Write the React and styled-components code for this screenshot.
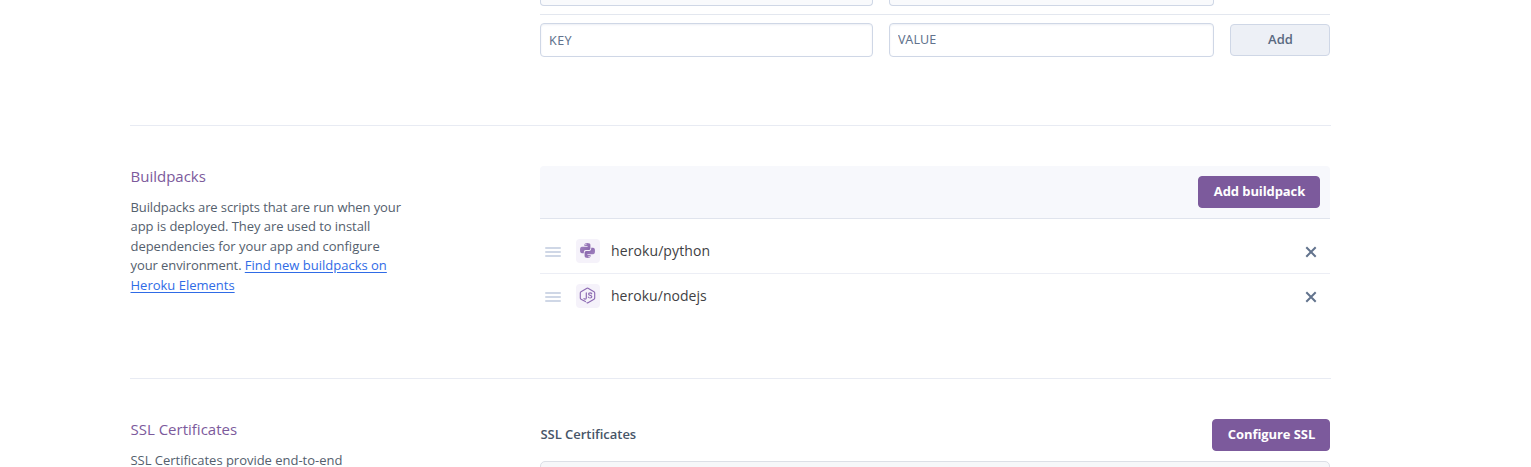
import React from "react";
import styled, { createGlobalStyle } from "styled-components";

const GlobalStyle = createGlobalStyle`
  *, *::before, *::after { box-sizing: border-box; }
  html, body { margin: 0; background: #fff; }
  body { font-family: "Open Sans", "Noto Sans", sans-serif; font-size: 13px; color: #54606d; }
`;

const Page = styled.main`
  width: 1201px;
  height: 467px;
  margin-left: 130px;
  overflow: hidden;
`;

const ConfigVars = styled.section`
  width: 790px;
  height: 125px;
  margin-left: 410px;
`;

const VarRow = styled.div`
  display: grid;
  grid-template-columns: 333px 325px 100px;
  column-gap: 16px;
  align-items: center;
`;

const SavedRow = styled(VarRow)`
  height: 15px;
  align-items: start;
  border-bottom: 1px solid #e3e7ef;
`;

const SavedField = styled.div`
  height: 6px;
  background: #f9fafc;
  border: 1px solid #cfd7e6;
  border-top: 0;
  border-radius: 0 0 4px 4px;
`;

const NewRow = styled(VarRow)`
  margin-top: 8px;
`;

const Field = styled.input`
  width: 100%;
  height: 34px;
  padding: ${(p) => (p.$lowered ? "0 8px" : "0 8px 2px")};
  border: 1px solid #cfd7e6;
  border-radius: 4px;
  background: #fff;
  box-shadow: inset 0 1px 2px rgba(207, 215, 230, 0.4);
  font: 12.5px "Noto Sans", sans-serif;
  letter-spacing: ${(p) => p.$tracking};
  &::placeholder { color: #62738d; opacity: 1; }
`;

const Button = styled.button`
  width: ${(p) => p.$width}px;
  height: 32px;
  padding: 0 0 2px 1px;
  border: 1px solid ${(p) => (p.$primary ? "#7c5a9c" : "#cfd7e6")};
  border-radius: 4px;
  background: ${(p) => (p.$primary ? "#7c5a9c" : "#edf0f6")};
  color: ${(p) => (p.$primary ? "#fff" : "#596981")};
  font: ${(p) => (p.$primary ? 700 : 600)} 13px "Open Sans", sans-serif;
  letter-spacing: ${(p) => p.$tracking || "0"};
  white-space: nowrap;
`;

const Section = styled.section`
  display: grid;
  grid-template-columns: 410px 790px;
  height: ${(p) => p.$height}px;
  padding-top: 40px;
  border-top: 1px solid #e8ebf3;
`;

const Intro = styled.div`
  padding-left: 0.5px;
`;

const Title = styled.h2`
  margin: 0;
  font-size: 15px;
  font-weight: 400;
  line-height: 20px;
  color: #7c5a9c;
`;

const Copy = styled.p`
  margin: 11.5px 0 0;
  line-height: 19.5px;
  white-space: nowrap;
`;

const Line = styled.span`
  display: block;
  letter-spacing: ${(p) => p.$tracking};
`;

const Link = styled.a`
  color: #2f6be6;
  letter-spacing: 0;
  text-decoration: underline;
  text-underline-offset: 2px;
`;

const PackHeader = styled.header`
  display: flex;
  justify-content: flex-end;
  height: 53px;
  padding: 10px;
  background: #f7f8fc;
  border-bottom: 1px solid #e0e4ed;
  border-radius: 4px 4px 0 0;
`;

const PackList = styled.ul`
  list-style: none;
  margin: 10px 0 0;
  padding: 0;
`;

const PackRow = styled.li`
  display: flex;
  align-items: center;
  height: 45px;
  padding: 0 13px 1px 5px;
  &:not(:last-child) { border-bottom: 1px solid #eceef5; }
  & + & { padding-bottom: 2px; }
`;

const Handle = styled.span`
  display: grid;
  gap: 2px;
  width: 16px;
  margin-top: 2px;
  &::before, &::after { content: ""; height: 2px; border-radius: 1px; background: #cfd7e6; }
`;

const HandleBar = styled.i`
  display: block;
  height: 2px;
  border-radius: 1px;
  background: #cfd7e6;
`;

const Tile = styled.span`
  display: grid;
  place-items: center;
  width: 24px;
  height: 24px;
  margin: 0 11px 0 15px;
  border-radius: 4px;
  background: #f5f2fa;
  svg { display: block; width: 17px; height: 17px; margin: -1px 0 0 -1px; }
`;

const PackName = styled.span`
  flex: 1;
  font-size: 14px;
  letter-spacing: ${(p) => p.$tracking};
  color: #3f3f44;
`;

const Remove = styled.svg`
  width: 12px;
  height: 12px;
  margin-top: 2px;
  stroke: #62738d;
  stroke-width: 2;
`;

const CertBar = styled.div`
  display: flex;
  justify-content: space-between;
  align-items: center;
`;

const CertLabel = styled.strong`
  padding: 0 0 2px 0.5px;
  font-weight: 600;
  letter-spacing: -0.03px;
  color: #475568;
`;

const CertBox = styled.div`
  height: 60px;
  margin-top: 10px;
  border: 1px solid #dcdfe6;
  border-radius: 5px;
  background: #f6f7f9;
`;

const snake =
  "M4.4 1.9Q4.4 0 7.4 0Q10.4 0 10.4 1.9V5.5Q10.4 7.1 8.8 7.1H5.6Q3.8 7.1 3.8 8.9V10.2H2Q0 10.2 0 6.9Q0 3.7 2 3.7H7.6V3H4.4ZM5.3 1.6A.6 .6 0 1 0 6.5 1.6A.6 .6 0 1 0 5.3 1.6Z";

function PythonIcon() {
  return (
    <svg viewBox="-1 -1 17 17" fill="url(#snakeFill)" fillRule="evenodd">
      <linearGradient id="snakeFill" x1="0" y1="0" x2="1" y2="1">
        <stop offset="0" stopColor="#a588c4" />
        <stop offset="1" stopColor="#8460a8" />
      </linearGradient>
      <path d={snake} />
      <path d={snake} transform="rotate(180 7.5 7.5)" />
    </svg>
  );
}

function NodeIcon() {
  return (
    <svg viewBox="0 0 17 17" fill="none" stroke="#8d6bb3" strokeLinejoin="round" strokeLinecap="round">
      <path strokeWidth="1.15" d="M6.4 14.6L2 12.2Q1.3 11.8 1.3 11.1V5.9Q1.3 5.2 2 4.8L8 1.3Q8.5 1 9 1.3L15 4.8Q15.7 5.2 15.7 5.9V11.1Q15.7 11.8 15 12.2L9 15.7Q8.5 16 8 15.7" />
      <path strokeWidth="1.2" d="M7.3 5.9V11Q7.3 12.2 6.1 12.2Q5.3 12.2 5 11.6M12.7 6.8Q12.4 5.9 11.1 5.9Q9.6 5.9 9.6 7.1Q9.6 8.2 11.1 8.4Q12.8 8.6 12.8 9.8Q12.8 11 11.1 11Q9.5 11 9.3 10" />
    </svg>
  );
}

function Pack({ children, name, tracking }) {
  return (
    <PackRow>
      <Handle><HandleBar /></Handle>
      <Tile>{children}</Tile>
      <PackName $tracking={tracking}>{name}</PackName>
      <Remove viewBox="0 0 12 12"><path d="M1.3 1.3l9.4 9.4M10.7 1.3L1.3 10.7" /></Remove>
    </PackRow>
  );
}

export default function App() {
  return (
    <>
      <GlobalStyle />
      <Page>
        <ConfigVars>
          <SavedRow><SavedField /><SavedField /></SavedRow>
          <NewRow>
            <Field placeholder="KEY" $lowered $tracking="0.4px" />
            <Field placeholder="VALUE" $tracking="0.2px" />
            <Button $width={100}>Add</Button>
          </NewRow>
        </ConfigVars>
        <Section $height={253}>
          <Intro>
            <Title>Buildpacks</Title>
            <Copy>
              <Line $tracking="-0.105px">Buildpacks are scripts that are run when your</Line>
              <Line $tracking="-0.06px">app is deployed. They are used to install</Line>
              <Line $tracking="-0.03px">dependencies for your app and configure</Line>
              <Line $tracking="-0.09px">your environment. <Link>Find new buildpacks on</Link></Line>
              <Line $tracking="-0.03px"><Link>Heroku Elements</Link></Line>
            </Copy>
          </Intro>
          <div>
            <PackHeader><Button $primary $width={122} $tracking="-0.1px">Add buildpack</Button></PackHeader>
            <PackList>
              <Pack name="heroku/python" tracking="0.1px"><PythonIcon /></Pack>
              <Pack name="heroku/nodejs" tracking="0.03px"><NodeIcon /></Pack>
            </PackList>
          </div>
        </Section>
        <Section $height={120}>
          <Intro>
            <Title>SSL Certificates</Title>
            <Copy><Line $tracking="-0.02px">SSL Certificates provide end-to-end</Line></Copy>
          </Intro>
          <div>
            <CertBar>
              <CertLabel>SSL Certificates</CertLabel>
              <Button $primary $width={118} $tracking="-0.08px">Configure SSL</Button>
            </CertBar>
            <CertBox />
          </div>
        </Section>
      </Page>
    </>
  );
}
